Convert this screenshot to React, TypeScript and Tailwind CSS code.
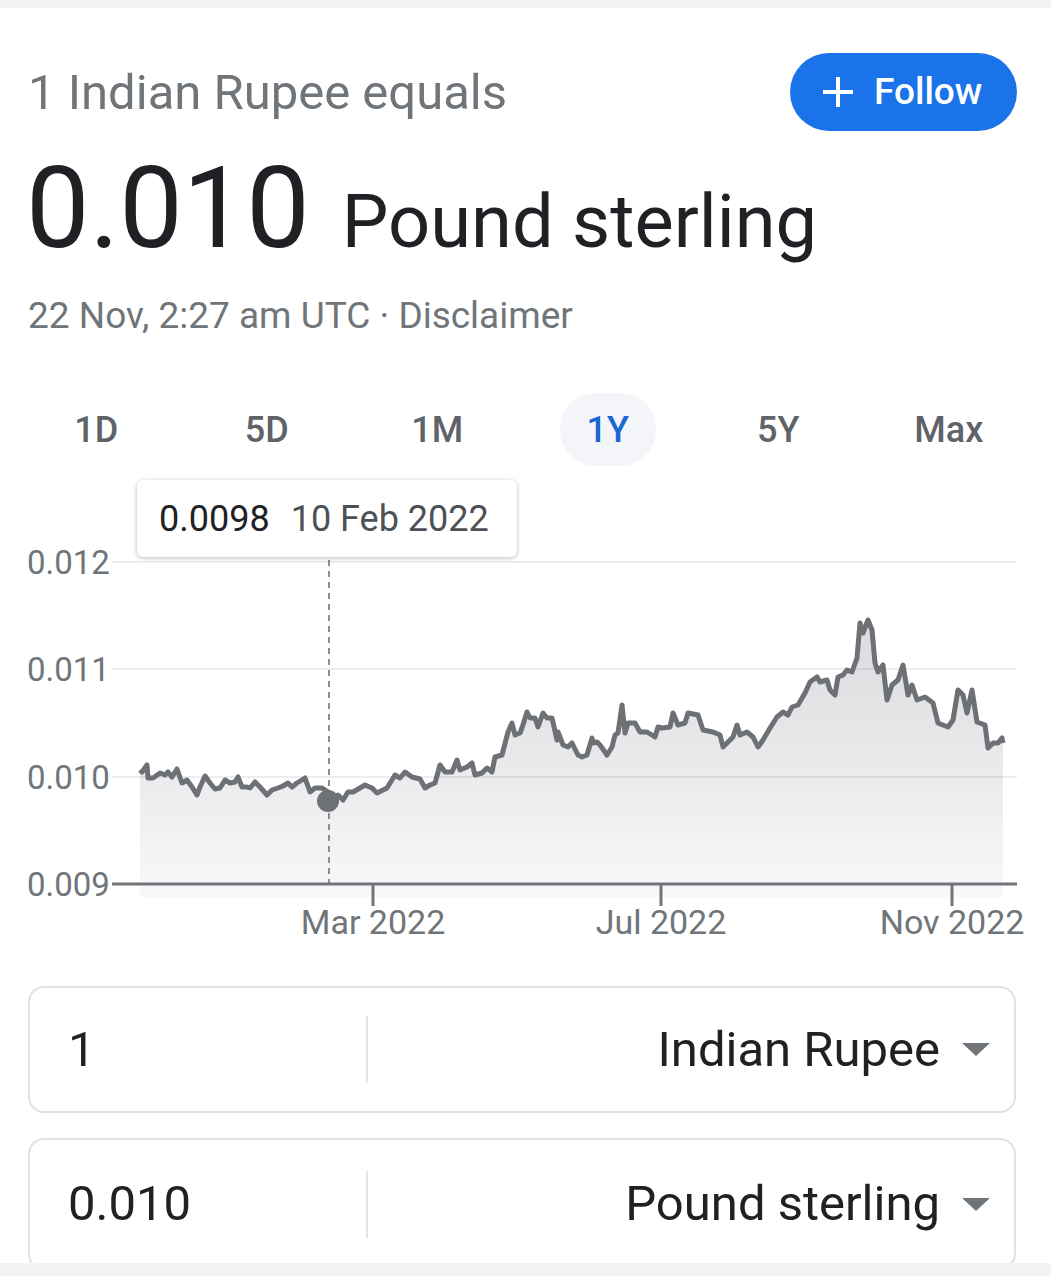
import React from "react"

const tabs = ["1D", "5D", "1M", "1Y", "5Y", "Max"]

// traced points of the 1Y line, in page coordinates
const pts: [number, number][] = [
  [140, 770], [142, 772], [147, 765], [148, 778], [153, 778], [160, 773], [165, 775], [168, 772], [172, 777], [177, 769],
  [182, 783], [187, 780], [192, 787], [197, 795], [200, 787], [205, 776], [210, 783], [215, 789], [220, 788], [225, 780],
  [230, 783], [235, 782], [238, 777], [242, 787], [247, 787], [250, 788], [255, 782], [260, 787], [267, 795], [272, 790],
  [278, 788], [283, 786], [288, 783], [292, 787], [297, 783], [305, 778], [310, 792], [315, 788], [322, 788], [328, 792],
  [333, 797], [338, 795], [343, 800], [348, 792], [353, 792], [360, 788], [365, 785], [372, 788], [377, 793], [383, 790],
  [387, 788], [395, 775], [400, 778], [405, 772], [412, 777], [420, 779], [425, 788], [430, 785], [435, 783], [440, 765],
  [445, 772], [452, 772], [457, 760], [460, 770], [467, 767], [472, 763], [475, 775], [482, 773], [487, 768], [492, 772],
  [495, 757], [502, 755], [508, 732], [512, 723], [515, 735], [520, 733], [522, 728], [527, 712], [530, 718], [535, 718],
  [538, 727], [543, 713], [547, 718], [552, 718], [557, 740], [558, 732], [563, 745], [568, 747], [572, 743], [578, 755],
  [582, 757], [587, 755], [592, 738], [593, 743], [597, 742], [600, 745], [605, 752], [607, 755], [612, 747], [615, 735],
  [618, 733], [622, 705], [625, 733], [628, 723], [635, 723], [640, 732], [647, 732], [655, 737], [658, 727], [662, 728],
  [670, 727], [673, 713], [678, 725], [685, 723], [688, 713], [698, 715], [703, 730], [713, 732], [720, 735], [723, 747],
  [728, 742], [733, 737], [737, 725], [740, 735], [747, 732], [753, 737], [758, 747], [763, 740], [770, 728], [777, 717],
  [783, 712], [788, 715], [792, 707], [798, 705], [805, 693], [810, 682], [817, 677], [820, 682], [827, 680], [830, 690],
  [835, 695], [838, 677], [843, 675], [847, 670], [852, 672], [857, 658], [860, 623], [863, 633], [868, 620], [872, 630],
  [875, 663], [878, 672], [883, 665], [887, 700], [892, 685], [898, 680], [903, 665], [908, 695], [912, 685], [917, 700],
  [925, 697], [933, 703], [938, 723], [948, 727], [953, 720], [958, 690], [963, 695], [967, 713], [972, 690], [977, 722],
  [985, 725], [988, 748], [993, 743], [998, 743], [1002, 738], [1003, 743],
]

const linePath = pts.map(([x, y], i) => `${i ? "L" : "M"}${x} ${y}`).join(" ")
const areaPath = `M140 897 ${pts.map(([x, y]) => `L${x} ${y}`).join(" ")} L1003 897 Z`

function Caret() {
  return (
    <svg width="28" height="13" viewBox="0 0 28 13" className="shrink-0">
      <path d="M0 0 L28 0 L14 13 Z" fill="#70757a" />
    </svg>
  )
}

function Chart() {
  return (
    <div className="relative h-[520px]">
      <svg width="1051" height="520" viewBox="0 0 1051 520" className="block">
        <defs>
          <linearGradient id="fill" gradientUnits="userSpaceOnUse" x1="0" y1="620" x2="0" y2="897">
            <stop offset="0" stopColor="#dadbde" />
            <stop offset="1" stopColor="#f8f8f9" />
          </linearGradient>
        </defs>
        <g transform="translate(0,-466)" fontFamily="Roboto, sans-serif">
          <path d={areaPath} fill="url(#fill)" />
          {[562, 669, 777].map((y) => (
            <line key={y} x1="112" x2="1017" y1={y} y2={y} stroke="rgba(0,0,0,0.07)" strokeWidth="2" />
          ))}
          {[
            ["0.012", 562],
            ["0.011", 669],
            ["0.010", 777],
            ["0.009", 884],
          ].map(([t, y]) => (
            <text key={t} x="27" y={Number(y) + 12} fontSize="33" fill="#70757a">
              {t}
            </text>
          ))}
          <line x1="329" x2="329" y1="560" y2="884" stroke="#8a8d91" strokeWidth="2" strokeDasharray="6 5" />
          <path d={linePath} fill="none" stroke="#6d7175" strokeWidth="5" strokeLinejoin="round" />
          <circle cx="328" cy="801" r="11" fill="#6d7175" />
          <line x1="112" x2="1017" y1="884" y2="884" stroke="#70757a" strokeWidth="3" />
          {[
            ["Mar 2022", 373],
            ["Jul 2022", 661],
            ["Nov 2022", 952],
          ].map(([t, x]) => (
            <g key={t}>
              <line x1={x} x2={x} y1="884" y2="906" stroke="#70757a" strokeWidth="3" />
              <text x={x} y="934" fontSize="34" fill="#70757a" textAnchor="middle">
                {t}
              </text>
            </g>
          ))}
        </g>
      </svg>
      <div className="absolute left-[137px] top-[14px] flex h-[77px] w-[380px] items-center gap-[21px] rounded-md bg-white pl-[22px] text-[36px] shadow-[0_1px_4px_rgba(0,0,0,0.28)]">
        <span className="text-[#202124]">0.0098</span>
        <span className="text-[#4d5156]">10 Feb 2022</span>
      </div>
    </div>
  )
}

export default function App() {
  return (
    <div className="h-[1276px] w-[1051px] overflow-hidden bg-white font-[Roboto,sans-serif]">
      <div className="h-[8px] bg-[#f1f3f4]" />

      <div className="mt-[45px] flex items-center justify-between pl-[28px] pr-[34px]">
        <h1 className="text-[49px] leading-none text-[#70757a]">1 Indian Rupee equals</h1>
        <button className="flex h-[78px] w-[227px] items-center gap-[20px] rounded-full bg-[#1a73e8] pl-[32px] text-white">
          <svg width="32" height="32" viewBox="0 0 32 32">
            <path d="M16 1 V31 M1 16 H31" stroke="white" strokeWidth="4" />
          </svg>
          <span className="text-[37px] font-medium">Follow</span>
        </button>
      </div>

      <div className="mt-[21px] flex items-baseline gap-[32px] pl-[26px] leading-none text-[#202124]">
        <span className="text-[113px]">0.010</span>
        <span className="text-[74px]">Pound sterling</span>
      </div>

      <p className="mt-[32px] pl-[28px] text-[37px] leading-none text-[#70757a]">
        22 Nov, 2:27 am UTC · Disclaimer
      </p>

      <div className="ml-[11px] mt-[59px] grid w-[1023px] grid-cols-6">
        {tabs.map((t) => (
          <div key={t} className="flex justify-center">
            <div
              className={
                t === "1Y"
                  ? "flex h-[73px] w-[96px] items-center justify-center rounded-full bg-[#f3f5f8] text-[36px] font-medium text-[#1967d2]"
                  : "flex h-[73px] w-[96px] items-center justify-center text-[36px] font-medium text-[#5f6368]"
              }
            >
              {t}
            </div>
          </div>
        ))}
      </div>

      <Chart />

      <div className="ml-[28px] flex h-[127px] w-[988px] items-center rounded-2xl border-2 border-[#dfe1e5]">
        <div className="flex h-[67px] w-[338px] items-center border-r-2 border-[#e4e5e7] pl-[38px] text-[49px] text-[#202124]">
          1
        </div>
        <div className="flex flex-1 items-center justify-end gap-[22px] pr-[24px] text-[49px] text-[#202124]">
          <span>Indian Rupee</span>
          <Caret />
        </div>
      </div>

      <div className="ml-[28px] mt-[25px] h-[125px] w-[988px] overflow-hidden">
        <div className="flex h-[132px] items-center rounded-2xl border-2 border-[#dfe1e5]">
          <div className="flex h-[67px] w-[338px] items-center border-r-2 border-[#e4e5e7] pl-[38px] text-[49px] text-[#202124]">
            0.010
          </div>
          <div className="flex flex-1 items-center justify-end gap-[22px] pr-[24px] text-[49px] text-[#202124]">
            <span>Pound sterling</span>
            <Caret />
          </div>
        </div>
      </div>

      <div className="h-[13px] bg-[#f1f3f4]" />
    </div>
  )
}
